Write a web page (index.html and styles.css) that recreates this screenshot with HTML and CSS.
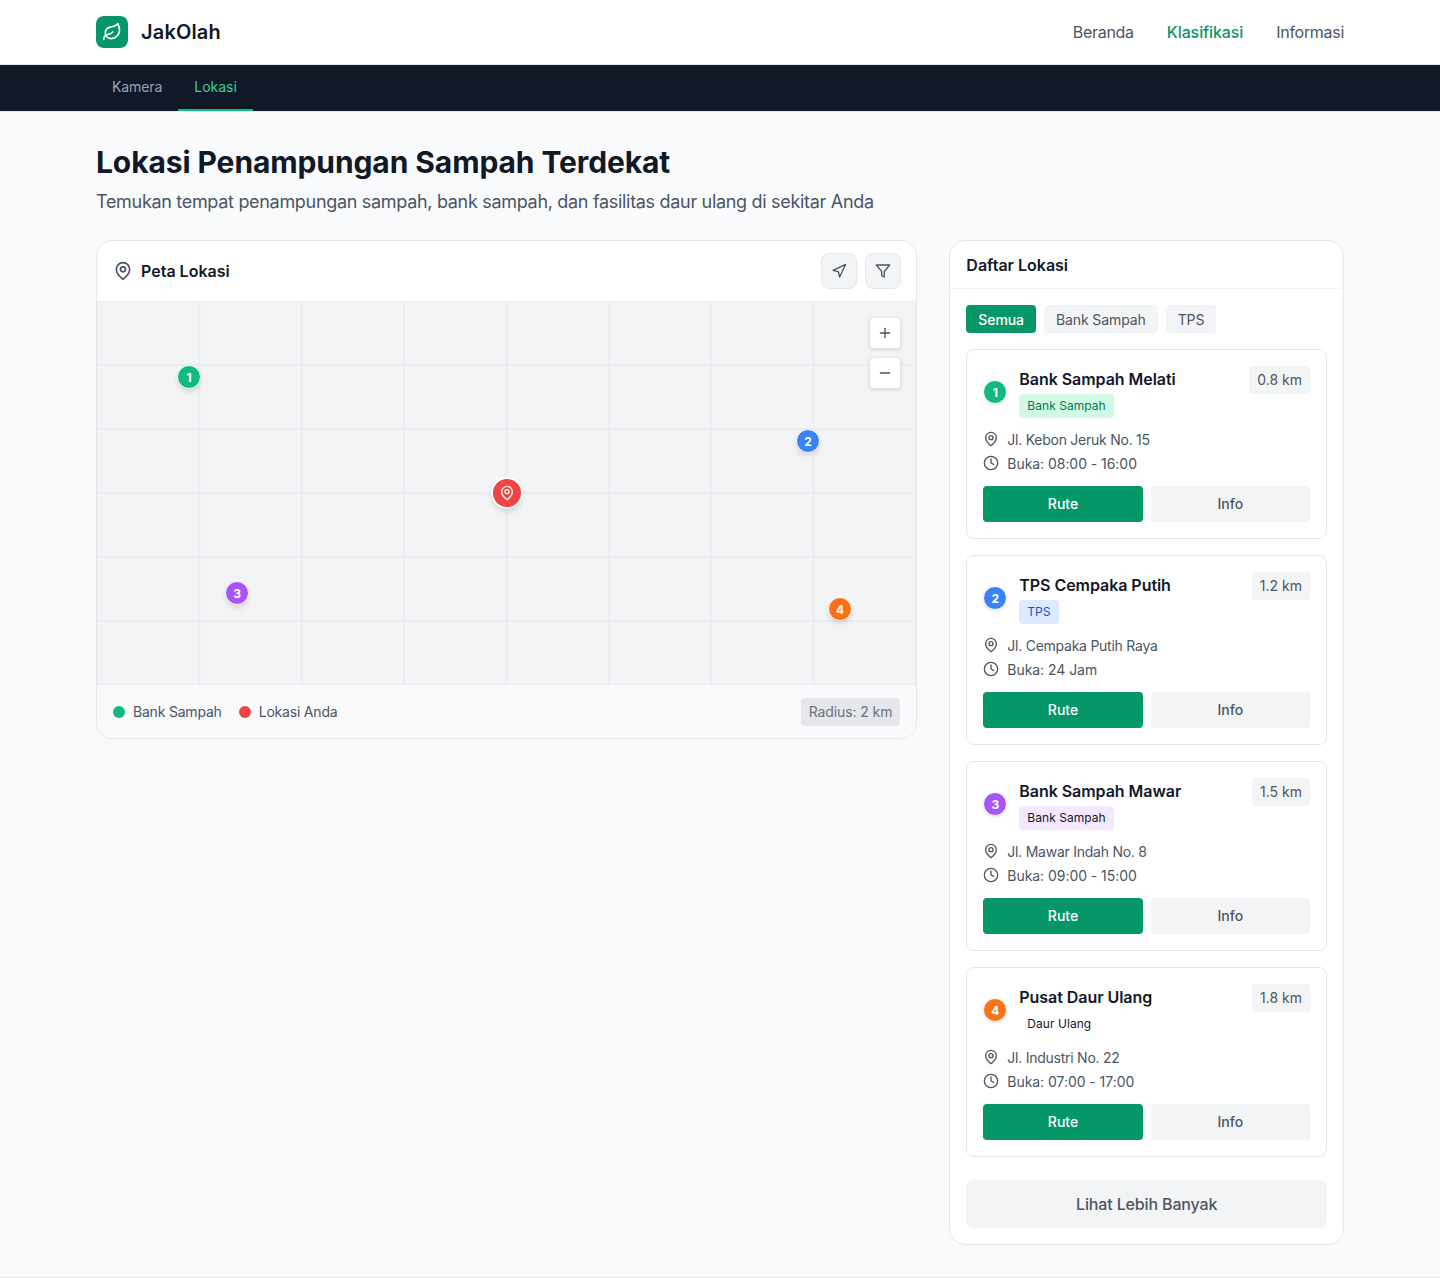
FILE: index.html
```html
<!DOCTYPE html>
<html lang="id">
<head>
  <meta charset="utf-8">
  <title>JakOlah - Lokasi</title>
  <link rel="stylesheet" href="styles.css">
</head>
<body>
  <header class="topbar">
    <a class="brand" href="#">
      <span class="brand-logo">
        <svg class="icon-20" viewBox="0 0 24 24"><path d="M11 20A7 7 0 0 1 9.8 6.1C15.5 5 17 4.48 19 2c1 2 2 4.18 2 8 0 5.5-4.78 10-10 10Z"/><path d="M2 21c0-3 1.85-5.36 5.08-6C9.5 14.52 12 13 13 12"/></svg>
      </span>
      <span class="brand-name">JakOlah</span>
    </a>
    <nav class="topnav">
      <a href="#">Beranda</a>
      <a href="#" class="active">Klasifikasi</a>
      <a href="#">Informasi</a>
    </nav>
  </header>

  <nav class="subnav">
    <a href="#">Kamera</a>
    <a href="#" class="active">Lokasi</a>
  </nav>

  <main class="page">
    <h1>Lokasi Penampungan Sampah Terdekat</h1>
    <p class="lead">Temukan tempat penampungan sampah, bank sampah, dan fasilitas daur ulang di sekitar Anda</p>

    <div class="columns">
      <section class="panel map-panel">
        <div class="map-head">
          <h2>
            <svg class="icon-20" viewBox="0 0 24 24"><path d="M20 10c0 6-8 12-8 12s-8-6-8-12a8 8 0 0 1 16 0Z"/><circle cx="12" cy="10" r="3"/></svg>
            Peta Lokasi
          </h2>
          <div class="map-tools">
            <button class="tool-btn"><svg class="icon-16" viewBox="0 0 24 24"><polygon points="3 11 22 2 13 21 11 13 3 11"/></svg></button>
            <button class="tool-btn"><svg class="icon-16" viewBox="0 0 24 24"><polygon points="22 3 2 3 10 12.46 10 19 14 21 14 12.46 22 3"/></svg></button>
          </div>
        </div>

        <div class="map">
          <span class="pin pin-green pin-a">1</span>
          <span class="pin pin-blue pin-b">2</span>
          <span class="pin pin-purple pin-c">3</span>
          <span class="pin pin-orange pin-d">4</span>
          <span class="pin-me">
            <svg class="icon-16" viewBox="0 0 24 24"><path d="M20 10c0 6-8 12-8 12s-8-6-8-12a8 8 0 0 1 16 0Z"/><circle cx="12" cy="10" r="3"/></svg>
          </span>
          <div class="zoom-tools">
            <button class="zoom-btn"><svg class="icon-16" viewBox="0 0 24 24"><path d="M5 12h14"/><path d="M12 5v14"/></svg></button>
            <button class="zoom-btn"><svg class="icon-16" viewBox="0 0 24 24"><path d="M5 12h14"/></svg></button>
          </div>
        </div>

        <div class="map-foot">
          <div class="legend">
            <span class="legend-item"><i class="dot dot-green"></i>Bank Sampah</span>
            <span class="legend-item"><i class="dot dot-red"></i>Lokasi Anda</span>
          </div>
          <span class="radius">Radius: 2 km</span>
        </div>
      </section>

      <aside class="panel list-panel">
        <h2 class="list-head">Daftar Lokasi</h2>
        <div class="list-body">
          <div class="tabs">
            <button class="tab active">Semua</button>
            <button class="tab">Bank Sampah</button>
            <button class="tab">TPS</button>
          </div>

          <article class="place">
            <div class="place-top">
              <span class="num pin-green">1</span>
              <div class="place-title">
                <h3>Bank Sampah Melati</h3>
                <span class="tag tag-green">Bank Sampah</span>
              </div>
              <span class="dist">0.8 km</span>
            </div>
            <p class="meta address"><svg class="icon-16" viewBox="0 0 24 24"><path d="M20 10c0 6-8 12-8 12s-8-6-8-12a8 8 0 0 1 16 0Z"/><circle cx="12" cy="10" r="3"/></svg>Jl. Kebon Jeruk No. 15</p>
            <p class="meta"><svg class="icon-16" viewBox="0 0 24 24"><circle cx="12" cy="12" r="10"/><polyline points="12 6 12 12 16 14"/></svg>Buka: 08:00 - 16:00</p>
            <div class="place-actions">
              <button class="btn btn-green">Rute</button>
              <button class="btn btn-grey">Info</button>
            </div>
          </article>

          <article class="place">
            <div class="place-top">
              <span class="num pin-blue">2</span>
              <div class="place-title">
                <h3>TPS Cempaka Putih</h3>
                <span class="tag tag-blue">TPS</span>
              </div>
              <span class="dist">1.2 km</span>
            </div>
            <p class="meta address"><svg class="icon-16" viewBox="0 0 24 24"><path d="M20 10c0 6-8 12-8 12s-8-6-8-12a8 8 0 0 1 16 0Z"/><circle cx="12" cy="10" r="3"/></svg>Jl. Cempaka Putih Raya</p>
            <p class="meta"><svg class="icon-16" viewBox="0 0 24 24"><circle cx="12" cy="12" r="10"/><polyline points="12 6 12 12 16 14"/></svg>Buka: 24 Jam</p>
            <div class="place-actions">
              <button class="btn btn-green">Rute</button>
              <button class="btn btn-grey">Info</button>
            </div>
          </article>

          <article class="place">
            <div class="place-top">
              <span class="num pin-purple">3</span>
              <div class="place-title">
                <h3>Bank Sampah Mawar</h3>
                <span class="tag tag-purple">Bank Sampah</span>
              </div>
              <span class="dist">1.5 km</span>
            </div>
            <p class="meta address"><svg class="icon-16" viewBox="0 0 24 24"><path d="M20 10c0 6-8 12-8 12s-8-6-8-12a8 8 0 0 1 16 0Z"/><circle cx="12" cy="10" r="3"/></svg>Jl. Mawar Indah No. 8</p>
            <p class="meta"><svg class="icon-16" viewBox="0 0 24 24"><circle cx="12" cy="12" r="10"/><polyline points="12 6 12 12 16 14"/></svg>Buka: 09:00 - 15:00</p>
            <div class="place-actions">
              <button class="btn btn-green">Rute</button>
              <button class="btn btn-grey">Info</button>
            </div>
          </article>

          <article class="place">
            <div class="place-top">
              <span class="num pin-orange">4</span>
              <div class="place-title">
                <h3>Pusat Daur Ulang</h3>
                <span class="tag tag-plain">Daur Ulang</span>
              </div>
              <span class="dist">1.8 km</span>
            </div>
            <p class="meta address"><svg class="icon-16" viewBox="0 0 24 24"><path d="M20 10c0 6-8 12-8 12s-8-6-8-12a8 8 0 0 1 16 0Z"/><circle cx="12" cy="10" r="3"/></svg>Jl. Industri No. 22</p>
            <p class="meta"><svg class="icon-16" viewBox="0 0 24 24"><circle cx="12" cy="12" r="10"/><polyline points="12 6 12 12 16 14"/></svg>Buka: 07:00 - 17:00</p>
            <div class="place-actions">
              <button class="btn btn-green">Rute</button>
              <button class="btn btn-grey">Info</button>
            </div>
          </article>

          <button class="more-btn">Lihat Lebih Banyak</button>
        </div>
      </aside>
    </div>
  </main>
  <footer class="foot-line"></footer>
</body>
</html>
```

FILE: styles.css
```css
* {
  box-sizing: border-box;
}

body {
  margin: 0;
  font-family: Inter, "Liberation Sans", sans-serif;
  background-color: #f9fafb;
  color: #111827;
}

a {
  color: inherit;
  text-decoration: none;
}

button {
  font-family: inherit;
  border: 0;
  cursor: pointer;
}

h1, h2, h3, p {
  margin: 0;
}

svg {
  fill: none;
  stroke: currentColor;
  stroke-width: 2;
  stroke-linecap: round;
  stroke-linejoin: round;
  flex-shrink: 0;
}

.icon-16 {
  width: 16px;
  height: 16px;
}

.icon-20 {
  width: 20px;
  height: 20px;
}

/* top bar */
.topbar {
  height: 65px;
  padding: 0 96px;
  display: flex;
  align-items: center;
  justify-content: space-between;
  background-color: #fff;
  border-bottom: 1px solid #e5e7eb;
}

.brand {
  display: flex;
  align-items: center;
  gap: 13px;
}

.brand-logo {
  width: 32px;
  height: 32px;
  border-radius: 8px;
  background-color: #059669;
  color: #fff;
  display: flex;
  align-items: center;
  justify-content: center;
}

.brand-name {
  font-size: 20px;
  font-weight: 600;
  letter-spacing: 0.15px;
}

.topnav {
  display: flex;
  gap: 33px;
  font-size: 16px;
  letter-spacing: -0.3px;
  color: #4b5563;
}

.topnav .active {
  color: #059669;
  font-weight: 500;
  letter-spacing: -0.1px;
}

/* dark sub nav */
.subnav {
  height: 47px;
  padding: 0 96px;
  display: flex;
  background-color: #111827;
  border-bottom: 1px solid #e5e7eb;
  font-size: 14px;
  letter-spacing: -0.1px;
  color: #9ca3af;
}

.subnav a {
  padding: 0 16px 2px;
  display: flex;
  align-items: center;
  border-bottom: 2px solid transparent;
}

.subnav .active {
  color: #34d399;
  border-bottom-color: #10b981;
  letter-spacing: 0;
}

/* page */
.page {
  padding: 32px 96px;
}

h1 {
  font-size: 30px;
  line-height: 36px;
  font-weight: 700;
  letter-spacing: -0.1px;
  margin-bottom: 8px;
}

.lead {
  font-size: 18px;
  line-height: 28px;
  letter-spacing: -0.31px;
  color: #4b5563;
  margin-bottom: 24px;
}

.columns {
  display: grid;
  grid-template-columns: repeat(3, 1fr);
  gap: 32px;
  align-items: start;
}

.panel {
  background-color: #fff;
  border: 1px solid #e5e7eb;
  border-radius: 16px;
  overflow: hidden;
}

.map-panel {
  grid-column: span 2;
}

.map-head {
  height: 60px;
  padding: 0 15.5px 0 16px;
  display: flex;
  align-items: center;
  justify-content: space-between;
}

.map-head h2 {
  display: flex;
  align-items: center;
  gap: 8px;
  font-size: 16px;
  font-weight: 600;
}

.map-head h2 svg {
  color: #4b5563;
}

.map-tools {
  display: flex;
  gap: 8px;
}

.tool-btn {
  width: 36px;
  height: 36px;
  border: 1px solid #e5e7eb;
  border-radius: 8px;
  background-color: #f3f4f6;
  color: #4b5563;
  display: flex;
  align-items: center;
  justify-content: center;
}

/* map */
.map {
  position: relative;
  height: 384px;
  background-color: #f3f4f6;
  background-image:
    linear-gradient(to right, transparent calc(100% - 2px), #ebecef 0),
    linear-gradient(to bottom, transparent calc(100% - 2px), #ebecef 0);
  background-size: 12.5% 16.6667%;
  background-position: 1px 1px;
}

.pin {
  position: absolute;
  width: 24px;
  height: 24px;
  border: 1px solid #fff;
  border-radius: 50%;
  color: #fff;
  font-size: 12px;
  font-weight: 700;
  display: flex;
  align-items: center;
  justify-content: center;
  box-shadow: 0 4px 6px -1px rgba(0, 0, 0, 0.1), 0 2px 4px -2px rgba(0, 0, 0, 0.1);
}

.pin-a {
  left: 80px;
  top: 64px;
}

.pin-b {
  left: 699px;
  top: 128px;
}

.pin-c {
  left: 128px;
  top: 280px;
}

.pin-d {
  left: 731px;
  top: 296px;
}

.pin-green {
  background-color: #10b981;
}

.pin-blue {
  background-color: #3b82f6;
}

.pin-purple {
  background-color: #a855f7;
}

.pin-orange {
  background-color: #f97316;
}

.pin-me {
  position: absolute;
  left: 394px;
  top: 176px;
  width: 32px;
  height: 32px;
  border: 2px solid #fff;
  border-radius: 50%;
  background-color: #ef4444;
  color: #fff;
  display: flex;
  align-items: center;
  justify-content: center;
  box-shadow: 0 4px 6px -1px rgba(0, 0, 0, 0.1), 0 2px 4px -2px rgba(0, 0, 0, 0.1);
}

.zoom-tools {
  position: absolute;
  top: 16px;
  right: 15.5px;
  display: flex;
  flex-direction: column;
  gap: 8px;
}

.zoom-btn {
  width: 32px;
  height: 32px;
  border-radius: 4px;
  background-color: #fff;
  border: 1px solid #e5e7eb;
  color: #4b5563;
  display: flex;
  align-items: center;
  justify-content: center;
  box-shadow: 0 1px 3px rgba(0, 0, 0, 0.15);
}

.map-foot {
  height: 53px;
  padding: 0 16px;
  display: flex;
  align-items: center;
  justify-content: space-between;
  background-color: #f9fafb;
  font-size: 14px;
  letter-spacing: -0.2px;
  color: #4b5563;
}

.legend {
  display: flex;
  gap: 17px;
}

.legend-item {
  display: flex;
  align-items: center;
  gap: 8px;
}

.dot {
  width: 12px;
  height: 12px;
  border-radius: 50%;
}

.dot-green {
  background-color: #10b981;
}

.dot-red {
  background-color: #ef4444;
}

.radius {
  padding: 4px 8px;
  line-height: 20px;
  border-radius: 4px;
  background-color: #e5e7eb;
  color: #6b7280;
  letter-spacing: -0.1px;
}

/* list */
.list-head {
  height: 48px;
  padding: 0 16px;
  display: flex;
  align-items: center;
  font-size: 16px;
  font-weight: 600;
  border-bottom: 1px solid #f3f4f6;
}

.list-body {
  padding: 16px;
  display: flex;
  flex-direction: column;
  gap: 16px;
}

.tabs {
  display: flex;
  gap: 8px;
}

.tab {
  height: 28px;
  padding: 0 12px;
  border-radius: 4px;
  background-color: #f3f4f6;
  color: #4b5563;
  font-size: 14px;
  letter-spacing: -0.1px;
}

.tab.active {
  background-color: #059669;
  color: #fff;
  font-weight: 500;
}

.place {
  height: 190px;
  padding: 17px 16px 16px;
  border: 1px solid #e5e7eb;
  border-radius: 8px;
}

.place-top {
  display: flex;
  align-items: center;
  gap: 12px;
  margin-bottom: 9px;
}

.num {
  width: 24px;
  height: 24px;
  margin-top: -1px;
  border: 1px solid #fff;
  border-radius: 50%;
  color: #fff;
  font-size: 12px;
  font-weight: 700;
  display: flex;
  align-items: center;
  justify-content: center;
  flex-shrink: 0;
  box-shadow: 0 1px 3px rgba(0, 0, 0, 0.1);
}

.place-title {
  flex: 1;
}

.place-title h3 {
  font-size: 16px;
  line-height: 24px;
  font-weight: 600;
  letter-spacing: -0.05px;
  margin-bottom: 3px;
}

.tag {
  display: inline-block;
  padding: 4px 8px;
  border-radius: 4px;
  font-size: 12px;
  line-height: 16px;
  letter-spacing: 0.05px;
  vertical-align: top;
}

.tag-green {
  background-color: #d1fae5;
  color: #047857;
}

.tag-blue {
  background-color: #dbeafe;
  color: #1d4ed8;
}

.tag-purple {
  background-color: #f3e8ff;
  color: #111827;
}

.tag-plain {
  color: #111827;
}

.dist {
  align-self: flex-start;
  margin-top: -1px;
  padding: 4px 8px;
  line-height: 20px;
  border-radius: 4px;
  background-color: #f3f4f6;
  color: #4b5563;
  font-size: 14px;
}

.meta {
  display: flex;
  align-items: center;
  gap: 8px;
  height: 24px;
  font-size: 14px;
  letter-spacing: -0.05px;
  color: #4b5563;
}

.meta.address {
  letter-spacing: -0.25px;
}

.place-actions {
  display: grid;
  grid-template-columns: 1fr 1fr;
  gap: 8px;
  margin-top: 11px;
}

.btn {
  height: 36px;
  padding: 0 0 2px;
  border-radius: 4px;
  font-size: 14px;
  font-weight: 500;
}

.btn-green {
  background-color: #059669;
  color: #fff;
}

.btn-grey {
  background-color: #f3f4f6;
  color: #4b5563;
}

.more-btn {
  height: 48px;
  margin-top: 7px;
  border-radius: 8px;
  background-color: #f3f4f6;
  color: #4b5563;
  font-size: 16px;
  font-weight: 500;
  letter-spacing: -0.15px;
}

.foot-line {
  border-top: 1px solid #e5e7eb;
}
```
